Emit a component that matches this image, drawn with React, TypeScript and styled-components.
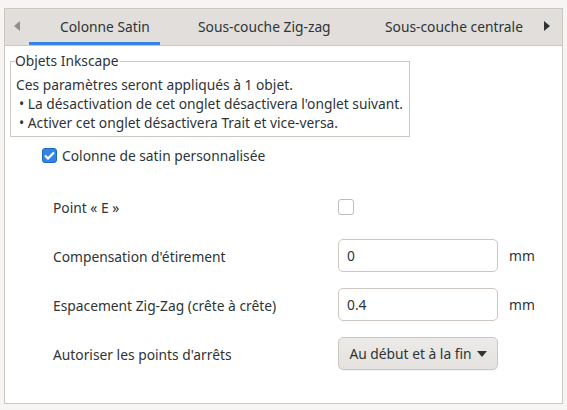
import React from "react";
import styled, { createGlobalStyle } from "styled-components";

const Global = createGlobalStyle`
  html, body { margin: 0; padding: 0; background: #f6f5f4; }
  body { font-family: "Noto Sans", "DejaVu Sans", sans-serif; font-size: 13.8px; color: #2e3436; }
  * { box-sizing: border-box; }
`;

const FS = "13.8px";

const Page = styled.div`
  width: 567px;
  height: 410px;
  padding: 8px 4px 6px 4px;
`;

const Notebook = styled.div`
  height: 396px;
  border: 1px solid #cdc7c2;
  display: flex;
  flex-direction: column;
  background: #ffffff;
`;

const TabBar = styled.div`
  height: 37px;
  flex: none;
  display: flex;
  align-items: stretch;
  background: #e1dedb;
  border-bottom: 1px solid #cdc7c2;
`;

const Arrow = styled.div<{ $dir: "left" | "right"; $dim?: boolean }>`
  width: ${(p) => (p.$dir === "left" ? 24 : 30)}px;
  display: flex;
  align-items: center;
  justify-content: center;
  padding-bottom: 2px;
  color: ${(p) => (p.$dim ? "#8d9091" : "#2e3436")};
  margin-left: ${(p) => (p.$dir === "right" ? "auto" : "0")};
`;

const Tab = styled.div<{ $active?: boolean; $pl: number; $w: number }>`
  width: ${(p) => p.$w}px;
  padding-left: ${(p) => p.$pl}px;
  padding-bottom: 2px;
  display: flex;
  align-items: center;
  white-space: nowrap;
  font-size: ${FS};
  color: #2e3436;
  box-shadow: ${(p) => (p.$active ? "inset 0 -3px 0 #3584e4" : "none")};
`;

const Content = styled.div`
  flex: 1;
  padding: 7px 5px 0 5px;
  display: flex;
  flex-direction: column;
`;

const Frame = styled.fieldset`
  margin: 0;
  padding: 6px 5px 4px 5px;
  width: 400px;
  border: 1px solid #cdc7c2;
  border-radius: 0;
  min-width: 0;
`;

const Legend = styled.legend`
  padding: 0 1px 0 0;
  margin-left: -1px;
  font-size: ${FS};
  line-height: 16px;
`;

const Line = styled.div<{ $bullet?: boolean }>`
  line-height: 19px;
  padding-left: ${(p) => (p.$bullet ? "3px" : "0")};
  white-space: nowrap;
`;

const CheckRow = styled.label`
  display: flex;
  align-items: center;
  gap: 5px;
  margin: 10px 0 0 32px;
  height: 16px;
`;

const Box = styled.span<{ $checked?: boolean; $size: number }>`
  width: ${(p) => p.$size}px;
  height: ${(p) => p.$size}px;
  border-radius: 3px;
  display: inline-flex;
  align-items: center;
  justify-content: center;
  flex: none;
  background: ${(p) => (p.$checked ? "#3584e4" : "#ffffff")};
  border: 1px solid ${(p) => (p.$checked ? "#1b6acb" : "#c0bdb8")};
`;

const Grid = styled.div`
  display: grid;
  grid-template-columns: 285px 160px auto;
  grid-auto-rows: 33px;
  row-gap: 16px;
  align-items: center;
  margin: 27px 0 0 43px;
`;

const Label = styled.div`
  font-size: ${FS};
  white-space: nowrap;
  padding-top: 1px;
`;

const Input = styled.div`
  height: 33px;
  border: 1px solid #cdc7c2;
  border-radius: 5px;
  background: #ffffff;
  display: flex;
  align-items: center;
  padding-left: 8px;
  font-size: ${FS};
`;

const Unit = styled.div`
  padding-left: 11px;
  font-size: ${FS};
`;

const Dropdown = styled.div`
  height: 33px;
  border: 1px solid #cdc7c2;
  border-radius: 5px;
  background: linear-gradient(#edebe9, #e4e1de);
  box-shadow: 0 1px 1px rgba(0,0,0,0.05);
  display: flex;
  align-items: center;
  justify-content: center;
  gap: 5px;
  font-size: ${FS};
  white-space: nowrap;
`;

const CheckCell = styled.div`
  display: flex;
  align-items: center;
`;

const Tri = ({ dir }: { dir: "left" | "right" | "down" }) => {
  if (dir === "down")
    return (
      <svg width="10" height="6" viewBox="0 0 10 6"><path d="M0 0h10L5 6z" fill="#2e3436" /></svg>
    );
  return (
    <svg width="6" height="10" viewBox="0 0 6 10">
      {dir === "left" ? <path d="M6 0v10L0 5z" fill="currentColor" /> : <path d="M0 0v10l6-5z" fill="currentColor" />}
    </svg>
  );
};

export default function App() {
  return (
    <>
      <Global />
      <Page>
        <Notebook>
          <TabBar>
            <Arrow $dir="left" $dim><Tri dir="left" /></Arrow>
            <Tab $active $pl={31} $w={131}>Colonne Satin</Tab>
            <Tab $pl={38} $w={187}>Sous-couche Zig-zag</Tab>
            <Tab $pl={38} $w={170}>Sous-couche centrale</Tab>
            <Arrow $dir="right"><Tri dir="right" /></Arrow>
          </TabBar>
          <Content>
            <Frame>
              <Legend>Objets Inkscape</Legend>
              <Line>Ces paramètres seront appliqués à 1 objet.</Line>
              <Line $bullet>• La désactivation de cet onglet désactivera l'onglet suivant.</Line>
              <Line $bullet>• Activer cet onglet désactivera Trait et vice-versa.</Line>
            </Frame>
            <CheckRow>
              <Box $checked $size={15}>
                <svg width="11" height="9" viewBox="0 0 11 9"><path d="M1 4.5l3 3L10 1.5" stroke="#fff" strokeWidth="2.2" fill="none" /></svg>
              </Box>
              Colonne de satin personnalisée
            </CheckRow>
            <Grid>
              <Label>Point « E »</Label>
              <CheckCell><Box $size={16} /></CheckCell>
              <div />
              <Label>Compensation d'étirement</Label>
              <Input>0</Input>
              <Unit>mm</Unit>
              <Label>Espacement Zig-Zag (crête à crête)</Label>
              <Input>0.4</Input>
              <Unit>mm</Unit>
              <Label>Autoriser les points d'arrêts</Label>
              <Dropdown>Au début et à la fin <Tri dir="down" /></Dropdown>
              <div />
            </Grid>
          </Content>
        </Notebook>
      </Page>
    </>
  );
}
